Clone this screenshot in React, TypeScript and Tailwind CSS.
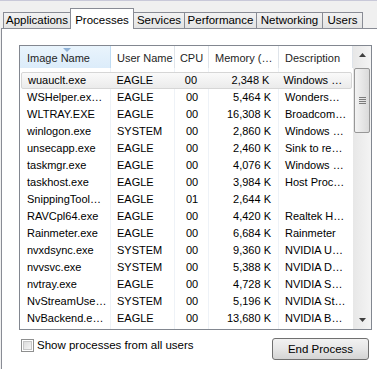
const rows = [
  ["wuauclt.exe", "EAGLE", "00", "2,348 K", "Windows …"],
  ["WSHelper.ex…", "EAGLE", "00", "5,464 K", "Wonders…"],
  ["WLTRAY.EXE", "EAGLE", "00", "16,308 K", "Broadcom…"],
  ["winlogon.exe", "SYSTEM", "00", "2,860 K", "Windows …"],
  ["unsecapp.exe", "EAGLE", "00", "2,460 K", "Sink to re…"],
  ["taskmgr.exe", "EAGLE", "00", "4,076 K", "Windows …"],
  ["taskhost.exe", "EAGLE", "00", "3,984 K", "Host Proc…"],
  ["SnippingTool…", "EAGLE", "01", "2,644 K", ""],
  ["RAVCpl64.exe", "EAGLE", "00", "4,420 K", "Realtek H…"],
  ["Rainmeter.exe", "EAGLE", "00", "6,684 K", "Rainmeter"],
  ["nvxdsync.exe", "SYSTEM", "00", "9,360 K", "NVIDIA U…"],
  ["nvvsvc.exe", "SYSTEM", "00", "5,388 K", "NVIDIA D…"],
  ["nvtray.exe", "EAGLE", "00", "4,728 K", "NVIDIA S…"],
  ["NvStreamUse…", "SYSTEM", "00", "5,196 K", "NVIDIA St…"],
  ["NvBackend.e…", "EAGLE", "00", "13,680 K", "NVIDIA B…"],
];

const Tab = ({ label, w, active }: { label: string; w: string; active?: boolean }) => {
  if (active) {
    return (
      <div
        className={`${w} relative z-10 -ml-px flex h-[21px] items-start justify-center border border-b-0 border-[#898c95] bg-white pt-[3px] text-[11.5px]`}
      >
        {label}
      </div>
    );
  }
  return (
    <div
      className={`${w} -ml-px mt-[4px] flex h-[16px] items-center justify-center border border-b-0 border-[#898c95] bg-gradient-to-b from-[#f2f2f2] to-[#e3e3e3] pt-px text-[11.5px]`}
    >
      {label}
    </div>
  );
};

const Scrollbar = () => (
  <div className="flex w-[18px] flex-col bg-gradient-to-r from-[#e7e7e7] to-[#f4f4f4]">
    <div className="flex h-[17px] items-center justify-center">
      <svg width="7" height="4" viewBox="0 0 7 4">
        <path d="M0 4 L3.5 0 L7 4 Z" fill="#3f3f3f" />
      </svg>
    </div>
    <div className="ml-px mt-[5px] flex h-[65px] w-[16px] items-center justify-center rounded-[2px] border border-[#979797] bg-gradient-to-r from-[#f3f3f3] to-[#dadada]">
      <div className="flex flex-col gap-px">
        <div className="h-px w-[7px] bg-[#7b7b7b]" />
        <div className="h-px w-[7px] bg-[#7b7b7b]" />
        <div className="h-px w-[7px] bg-[#7b7b7b]" />
        <div className="h-px w-[7px] bg-[#7b7b7b]" />
      </div>
    </div>
    <div className="flex-1" />
    <div className="flex h-[17px] items-center justify-center pb-[2px]">
      <svg width="7" height="4" viewBox="0 0 7 4">
        <path d="M0 0 L7 0 L3.5 4 Z" fill="#3f3f3f" />
      </svg>
    </div>
  </div>
);

export default function App() {
  return (
    <div className="h-[369px] w-[377px] overflow-hidden border-t border-[#c9c9d9] bg-[#f0f0f0] font-['Liberation_Sans',Arial,sans-serif] text-[11px] text-black">
      {/* Tabs */}
      <div className="mt-[7px] flex h-[20px] items-start pl-[4px]">
        <Tab label="Applications" w="w-[68px]" />
        <Tab label="Processes" w="w-[64px]" active />
        <Tab label="Services" w="w-[52px]" />
        <Tab label="Performance" w="w-[73px]" />
        <Tab label="Networking" w="w-[67px]" />
        <Tab label="Users" w="w-[41px]" />
      </div>

      {/* Panel */}
      <div className="ml-px h-[345px] w-[390px] border border-[#898c95] bg-white pl-[17px] pt-[16px]">
        <div className="flex h-[285px] w-[353px] border border-[#828790] bg-white">
          <div className="flex w-[333px] flex-col">
            {/* Header */}
            <div className="flex h-[22px] text-[#1e1e1e]">
              <div className="relative flex w-[91px] items-center border-r border-[#c0dcf3] bg-gradient-to-b from-[#e9f4fc] to-[#dcecfa] pl-[7px] pt-[2px]">
                <svg className="absolute left-[43px] top-[2px]" width="8" height="4" viewBox="0 0 8 4">
                  <path d="M0 0 L8 0 L4 4 Z" fill="#8fb1d6" />
                </svg>
                Image Name
              </div>
              <div className="flex w-[64px] items-center border-r border-[#dfe4ea] pl-[6px] pt-[2px]">User Name</div>
              <div className="flex w-[34px] items-center justify-center border-r border-[#dfe4ea] pt-[2px]">CPU</div>
              <div className="flex w-[70px] items-center border-r border-[#dfe4ea] pl-[6px] pt-[2px]">Memory (…</div>
              <div className="flex w-[74px] items-center border-r border-[#dfe4ea] pl-[6px] pt-[2px]">Description</div>
            </div>
            {/* Body */}
            <div className="relative flex-1 pt-[4px]">
              <div className="pointer-events-none absolute inset-0 flex">
                <div className="w-[91px] border-r border-[#eef2f7]" />
                <div className="w-[64px] border-r border-[#eef2f7]" />
                <div className="w-[34px] border-r border-[#eef2f7]" />
                <div className="w-[70px] border-r border-[#eef2f7]" />
              </div>
              {rows.map((r, i) => (
                <div
                  key={i}
                  className={`relative flex h-[17px] items-center whitespace-nowrap ${
                    i === 0
                      ? "ml-px w-[331px] rounded-[2px] border border-[#d6d6d6] bg-gradient-to-b from-[#fafafa] to-[#ebebeb]"
                      : ""
                  }`}
                >
                  <div className={`${i === 0 ? "w-[89px] pl-[6px]" : "w-[91px] pl-[7px]"} overflow-hidden`}>{r[0]}</div>
                  <div className="w-[64px] overflow-hidden pl-[6px]">{r[1]}</div>
                  <div className="w-[34px] text-center">{r[2]}</div>
                  <div className="w-[70px] pr-[8px] text-right">{r[3]}</div>
                  <div className="w-[74px] overflow-hidden pl-[6px]">{r[4]}</div>
                </div>
              ))}
            </div>
          </div>
          <Scrollbar />
        </div>

        {/* Footer */}
        <div className="mt-[7px] flex w-[353px] items-start justify-between">
          <label className="flex items-center gap-[3px] pl-[2px] text-[11.5px]">
            <span className="flex h-[13px] w-[13px] items-center justify-center border border-[#8e8f8f] bg-white">
              <span className="h-[9px] w-[9px] border border-[#c6c6c6] bg-gradient-to-br from-[#dcdcdc] to-[#f5f5f5]" />
            </span>
            Show processes from all users
          </label>
          <button className="mr-[3px] mt-px flex h-[22px] w-[97px] items-center justify-center rounded-[3px] border border-[#707070] bg-gradient-to-b from-[#f2f2f2] via-[#e6e6e6] to-[#d4d4d4] pt-px text-[11.5px]">
            End Process
          </button>
        </div>
      </div>
    </div>
  );
}
